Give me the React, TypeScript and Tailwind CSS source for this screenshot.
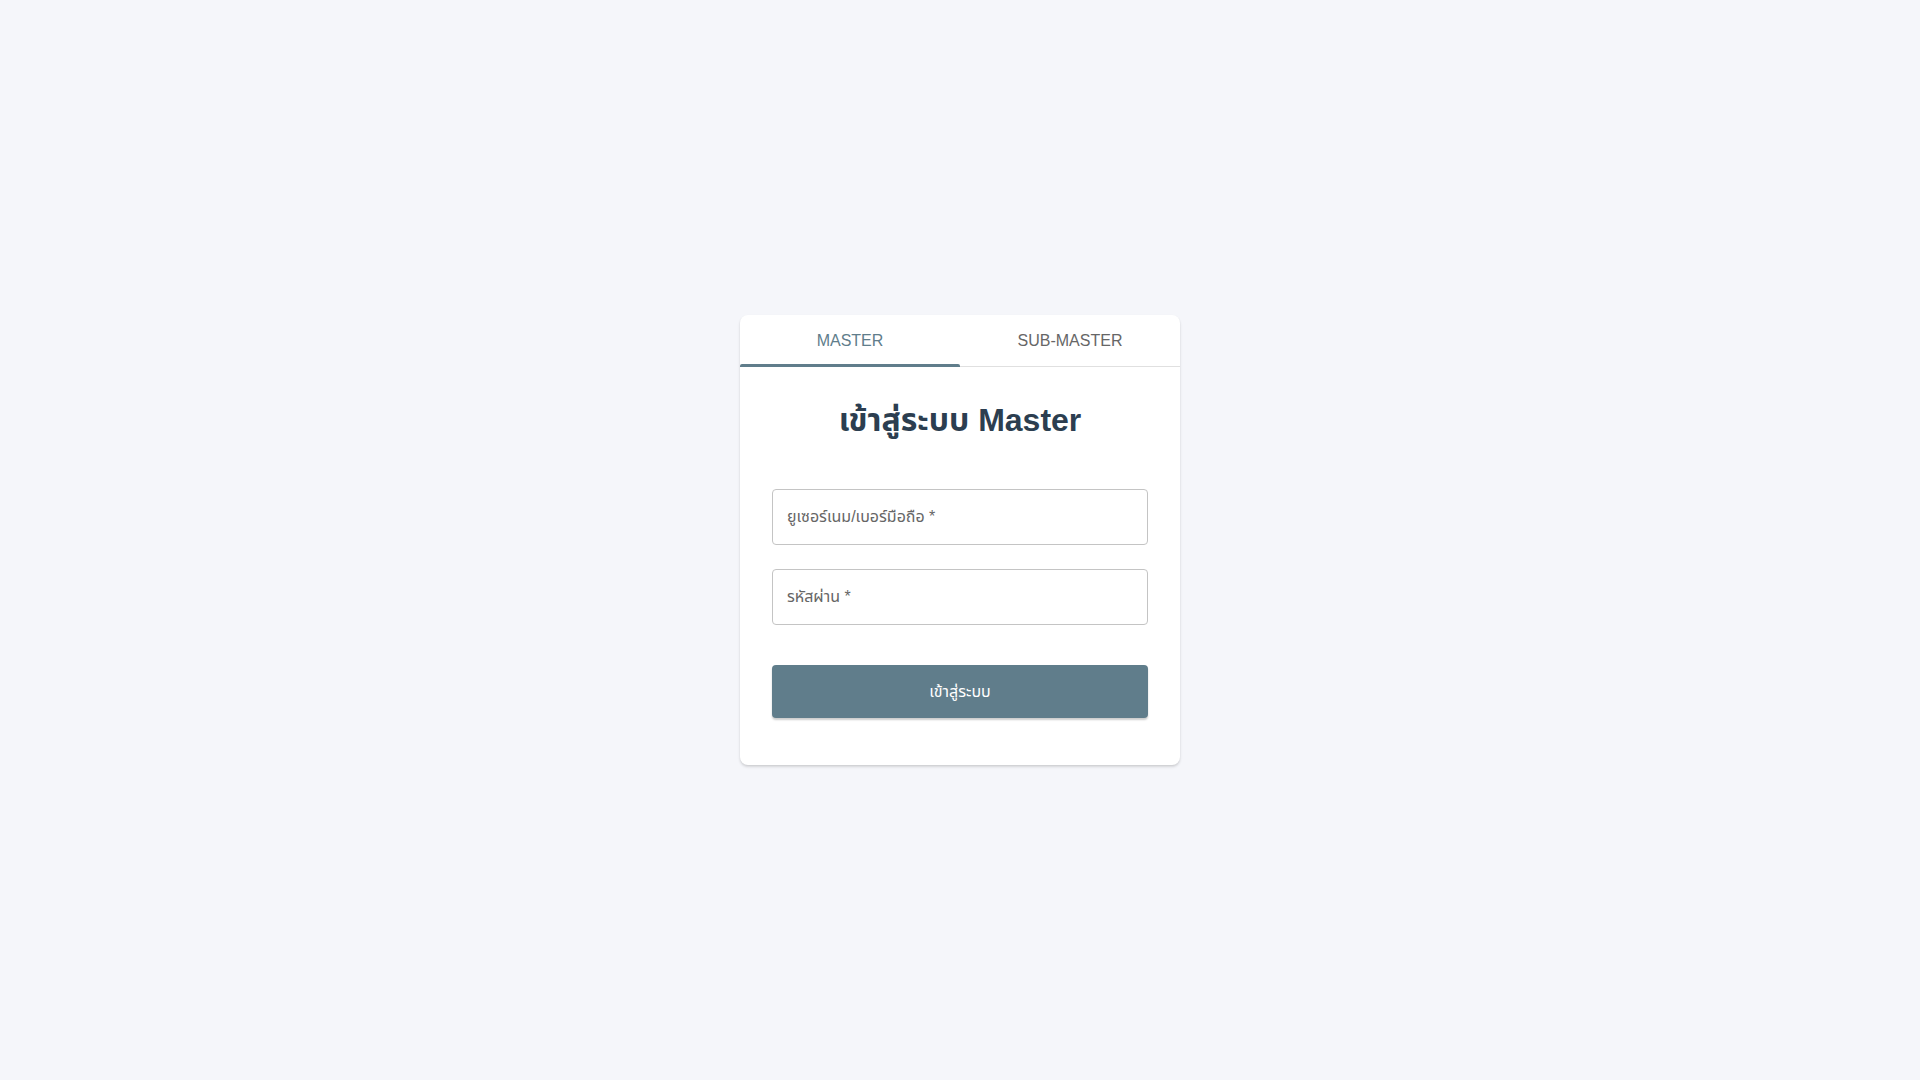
import React, { useState } from "react";

export default function App() {
  const [tab, setTab] = useState(0);
  return (
    <div
      className="min-h-screen w-full bg-[#f5f6fa] flex items-center justify-center"
      style={{ fontFamily: '"Liberation Sans", "Noto Sans", "Noto Sans Thai", sans-serif' }}
    >
      <div className="w-[440px] bg-white rounded-lg shadow-[0_2px_3px_rgba(0,0,0,0.12),0_1px_2px_rgba(0,0,0,0.06)] overflow-hidden">
        <div className="flex h-[52px] border-b border-[#e0e0e0]">
          {["MASTER", "SUB-MASTER"].map((t, i) => (
            <button
              key={t}
              onClick={() => setTab(i)}
              className={
                "relative flex-1 flex items-center justify-center text-[16px] " +
                (tab === i ? "text-[#607d8b]" : "text-[#666666]")
              }
            >
              {t}
              {tab === i && (
                <span className="absolute left-0 right-0 bottom-[-1px] h-[3px] bg-[#607d8b] rounded-t-[2px]" />
              )}
            </button>
          ))}
        </div>
        <div className="px-8 pt-[34px] pb-[47px]">
          <h1 className="text-center text-[32px] leading-[38px] font-bold text-[#2c3e50]">
            {tab === 0 ? "เข้าสู่ระบบ Master" : "เข้าสู่ระบบ Sub-Master"}
          </h1>
          <div className="mt-[50px] flex flex-col gap-[24px]">
            <div className="h-[56px] border border-[#c4c4c4] rounded-[4px] flex items-center px-[14px]">
              <span className="text-[16px] text-[#666666]">ยูเซอร์เนม/เบอร์มือถือ *</span>
            </div>
            <div className="h-[56px] border border-[#c4c4c4] rounded-[4px] flex items-center px-[14px]">
              <span className="text-[16px] text-[#666666]">รหัสผ่าน *</span>
            </div>
          </div>
          <button className="mt-[40px] w-full h-[53px] rounded-[4px] bg-[#607d8b] text-white text-[16px] shadow-[0_2px_2px_rgba(0,0,0,0.2)]">
            เข้าสู่ระบบ
          </button>
        </div>
      </div>
    </div>
  );
}
